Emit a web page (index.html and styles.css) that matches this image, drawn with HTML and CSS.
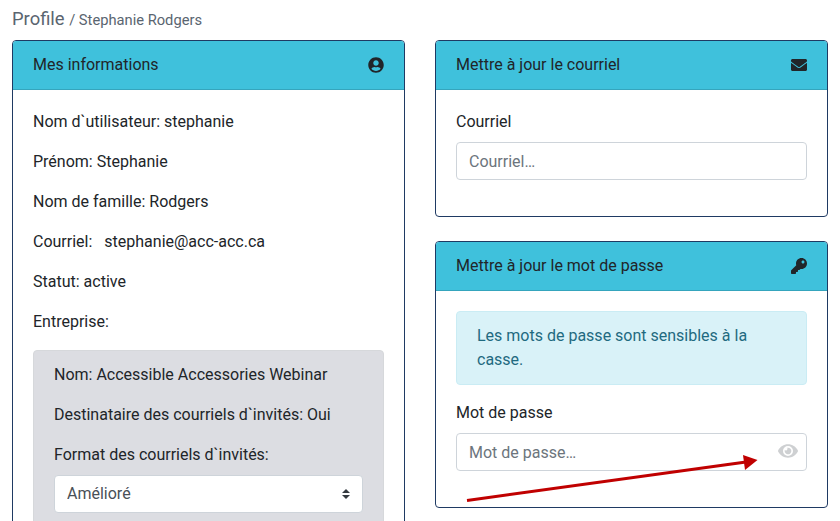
FILE: index.html
```html
<!DOCTYPE html>
<html lang="fr">
<head>
    <meta charset="UTF-8">
    <meta name="viewport" content="width=device-width, initial-scale=1.0">
    <title>Profile - Stephanie Rodgers</title>
    <link rel="stylesheet" href="styles.css">
</head>
<body>
    <main class="page">
        <h1 class="page-title">Profile <small>/ Stephanie Rodgers</small></h1>

        <div class="columns">
            <section class="card">
                <header class="card-header">
                    <span>Mes informations</span>
                    <svg class="icon" viewBox="0 0 496 512" aria-hidden="true"><path d="M248 8C111 8 0 119 0 256s111 248 248 248 248-111 248-248S385 8 248 8zm0 96c48.6 0 88 39.4 88 88s-39.4 88-88 88-88-39.4-88-88 39.4-88 88-88zm0 344c-58.7 0-111.3-26.6-146.5-68.2 18.8-35.4 55.6-59.8 98.5-59.8 2.4 0 4.8.4 7.1 1.1 13 4.2 26.6 6.9 40.9 6.9 14.3 0 28-2.7 40.9-6.9 2.3-.7 4.7-1.1 7.1-1.1 42.9 0 79.7 24.4 98.5 59.8C359.3 421.4 306.7 448 248 448z"/></svg>
                </header>
                <div class="card-body">
                    <p>Nom d`utilisateur: stephanie</p>
                    <p>Prénom: Stephanie</p>
                    <p>Nom de famille: Rodgers</p>
                    <p class="email-line">Courriel: <span>stephanie@acc-acc.ca</span></p>
                    <p>Statut: active</p>
                    <p>Entreprise:</p>
                    <div class="company">
                        <p>Nom: Accessible Accessories Webinar</p>
                        <p>Destinataire des courriels d`invités: Oui</p>
                        <div class="form-group">
                            <label class="form-label" for="emailFormat">Format des courriels d`invités:</label>
                            <select id="emailFormat" class="form-select">
                                <option>Amélioré</option>
                            </select>
                        </div>
                    </div>
                </div>
            </section>

            <div class="stack">
                <section class="card">
                    <header class="card-header">
                        <span>Mettre à jour le courriel</span>
                        <svg class="icon" viewBox="0 0 512 512" aria-hidden="true"><path d="M502.3 190.8c3.9-3.1 9.7-.2 9.7 4.7V400c0 26.5-21.5 48-48 48H48c-26.5 0-48-21.5-48-48V195.6c0-5 5.7-7.8 9.7-4.7 22.4 17.4 52.1 39.5 154.1 113.6 21.1 15.4 56.7 47.8 92.2 47.6 35.7.3 72-32.8 92.3-47.6 102-74.1 131.6-96.3 154-113.7zM256 320c23.2.4 56.6-29.2 73.4-41.4 132.7-96.3 142.8-104.7 173.4-128.7 5.8-4.5 9.2-11.5 9.2-18.9v-19c0-26.5-21.5-48-48-48H48C21.5 64 0 85.5 0 112v19c0 7.4 3.4 14.3 9.2 18.9 30.6 23.9 40.7 32.4 173.4 128.7 16.8 12.2 50.2 41.8 73.4 41.4z"/></svg>
                    </header>
                    <div class="card-body">
                        <div class="form-group">
                            <label class="form-label" for="email">Courriel</label>
                            <input type="email" id="email" class="form-control" placeholder="Courriel…">
                        </div>
                    </div>
                </section>

                <section class="card">
                    <header class="card-header">
                        <span>Mettre à jour le mot de passe</span>
                        <svg class="icon" viewBox="0 0 512 512" aria-hidden="true"><path d="M512 176.001C512 273.203 433.202 352 336 352c-11.22 0-22.19-1.062-32.827-3.069l-24.012 27.014A23.999 23.999 0 0 1 261.223 384H224v40c0 13.255-10.745 24-24 24h-40v40c0 13.255-10.745 24-24 24H24c-13.255 0-24-10.745-24-24v-78.059c0-6.365 2.529-12.47 7.029-16.971l161.802-161.802C163.108 213.814 160 195.271 160 176 160 78.798 238.797.001 335.999 0 433.488-.001 512 78.511 512 176.001zM336 128c0 26.51 21.49 48 48 48s48-21.49 48-48-21.49-48-48-48-48 21.49-48 48z"/></svg>
                    </header>
                    <div class="card-body">
                        <div class="alert">Les mots de passe sont sensibles à la casse.</div>
                        <div class="form-group">
                            <label class="form-label" for="password">Mot de passe</label>
                            <div class="password-field">
                                <input type="password" id="password" class="form-control" placeholder="Mot de passe…">
                                <svg class="eye-icon" viewBox="0 0 576 512" aria-hidden="true"><path d="M572.52 241.4C518.29 135.59 410.93 64 288 64S57.68 135.64 3.48 241.41a32.35 32.35 0 0 0 0 29.19C57.71 376.41 165.07 448 288 448s230.32-71.64 284.52-177.41a32.35 32.35 0 0 0 0-29.19zM288 400a144 144 0 1 1 144-144 143.93 143.93 0 0 1-144 144zm0-240a95.31 95.31 0 0 0-25.31 3.79 47.85 47.85 0 0 1-66.9 66.9A95.78 95.78 0 1 0 288 160z"/></svg>
                            </div>
                        </div>
                    </div>
                </section>
            </div>
        </div>
    </main>

    <!-- Annotation arrow drawn over the screenshot -->
    <svg class="annotation" viewBox="0 0 840 521" aria-hidden="true">
        <line x1="467" y1="500.5" x2="746" y2="462" stroke="#c00000" stroke-width="3"/>
        <polygon points="757.5,460 743,455 745,470" fill="#c00000"/>
    </svg>
</body>
</html>
```

FILE: styles.css
```css
/* Root Variables */
:root {
    --card-border: #1f3a63;
    --header-color: #3fc1dc;
    --text-color: #212529;
    --input-border: #ced4da;
    --muted-color: #6c757d;
    --border-radius: 4px;
}

/* Base Styles */
* {
    box-sizing: border-box;
}

html,
body {
    height: 100%;
    margin: 0;
    overflow: hidden;
}

body {
    position: relative;
    font-family: Roboto, sans-serif;
    font-size: 16px;
    line-height: 24px;
    color: var(--text-color);
    background: #fff;
}

p {
    margin: 0 0 16px;
}

/* Page */
.page {
    padding: 6px 12px 0;
}

.page-title {
    margin: 0 0 7px;
    font-size: 18.4px;
    font-weight: 400;
    line-height: 25px;
    color: #5a6570;
}

.page-title small {
    font-size: 80%;
}

.columns {
    display: grid;
    grid-template-columns: 393px 393px;
    gap: 30px;
    align-items: start;
}

.stack {
    display: grid;
    gap: 24px;
}

/* Cards */
.card {
    background: #fff;
    border: 1px solid var(--card-border);
    border-radius: var(--border-radius);
    overflow: hidden;
}

.card-header {
    display: flex;
    justify-content: space-between;
    align-items: center;
    padding: 12px 20px;
    background: var(--header-color);
    border-bottom: 1px solid #35a5bd;
}

.card-body {
    padding: 20px;
}

.icon {
    display: block;
    width: 16px;
    height: 16px;
    fill: #212529;
}

/* Company box */
.company {
    padding: 12px 20px;
    background: #dcdde2;
    border: 1px solid #d6d8db;
    border-radius: var(--border-radius);
}

/* Forms */
.form-group {
    margin-bottom: 16px;
}

.form-label {
    display: block;
    margin-bottom: 8px;
}

.form-control,
.form-select {
    display: block;
    width: 100%;
    height: 38px;
    padding: 6px 12px;
    font-family: inherit;
    font-size: 16px;
    line-height: 24px;
    color: #495057;
    background-color: #fff;
    border: 1px solid var(--input-border);
    border-radius: var(--border-radius);
}

.form-control::placeholder {
    color: var(--muted-color);
    opacity: 1;
}

.form-select {
    appearance: none;
    padding-right: 28px;
    background-image: url("data:image/svg+xml,%3csvg xmlns='http://www.w3.org/2000/svg' viewBox='0 0 4 5'%3e%3cpath fill='%23343a40' d='M2 0L0 2h4zm0 5L0 3h4z'/%3e%3c/svg%3e");
    background-repeat: no-repeat;
    background-position: right 12px center;
    background-size: 8px 10px;
}

.password-field {
    position: relative;
}

.eye-icon {
    position: absolute;
    top: 9px;
    right: 9px;
    width: 20px;
    height: 18px;
    fill: #ced0d2;
}

/* Alert */
.alert {
    margin-bottom: 16px;
    padding: 12px 20px;
    color: #1f6a80;
    background: #d9f2f8;
    border: 1px solid #caecf4;
    border-radius: var(--border-radius);
}

.email-line span {
    margin-left: 8px;
}

/* Annotation */
.annotation {
    position: absolute;
    top: 0;
    left: 0;
    width: 840px;
    height: 521px;
    pointer-events: none;
}
```
